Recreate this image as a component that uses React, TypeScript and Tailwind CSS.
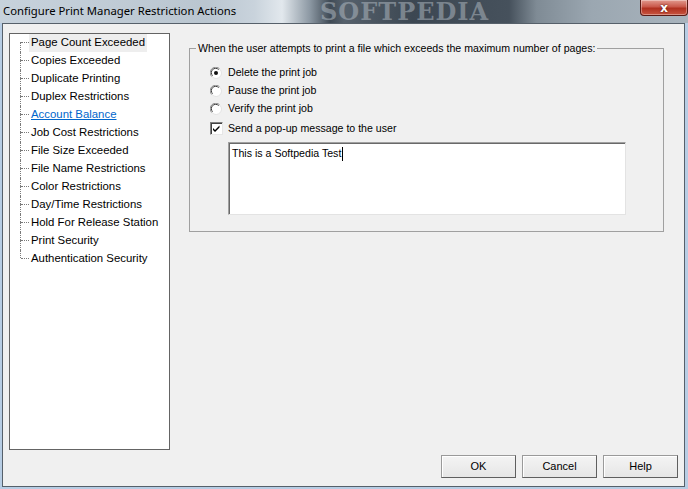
import React from "react";

const treeItems = [
	"Page Count Exceeded",
	"Copies Exceeded",
	"Duplicate Printing",
	"Duplex Restrictions",
	"Account Balance",
	"Job Cost Restrictions",
	"File Size Exceeded",
	"File Name Restrictions",
	"Color Restrictions",
	"Day/Time Restrictions",
	"Hold For Release Station",
	"Print Security",
	"Authentication Security",
];

const actions = ["Delete the print job", "Pause the print job", "Verify the print job"];

function Radio({ checked }: { checked?: boolean }) {
	return (
		<svg width="12" height="12" viewBox="0 0 12 12" className="shrink-0">
			<circle cx="6" cy="6" r="5.5" fill="#ffffff" />
			<path d="M1.8 9.6 A5.3 5.3 0 0 1 9.6 1.8" fill="none" stroke="#8a8a8a" strokeWidth="1" />
			<path d="M2.6 8.7 A4.2 4.2 0 0 1 8.7 2.6" fill="none" stroke="#404040" strokeWidth="1" />
			<path d="M9.9 2.3 A5.3 5.3 0 0 1 2.3 9.9" fill="none" stroke="#e2e2e2" strokeWidth="1" />
			{checked && <circle cx="6" cy="6" r="2" fill="#111111" />}
		</svg>
	);
}

function Checkbox({ checked }: { checked?: boolean }) {
	return (
		<div className="flex h-[13px] w-[13px] shrink-0 items-center justify-center border-t border-l border-r border-b border-t-[#808080] border-l-[#808080] border-r-[#e6e6e6] border-b-[#e6e6e6] bg-white shadow-[inset_1px_1px_0_#404040]">
			{checked && (
				<svg width="9" height="9" viewBox="0 0 9 9">
					<path d="M1 4 L3 6 L7.5 1.5 L7.5 3.5 L3 8 L1 6 Z" fill="#000000" />
				</svg>
			)}
		</div>
	);
}

function TreeRow({ label, index }: { label: string; index: number }) {
	const first = index === 0;
	const last = index === treeItems.length - 1;
	const link = label === "Account Balance";
	return (
		<div className="flex h-[18px] items-stretch">
			<div className="w-[10px] shrink-0" />
			<div className="flex w-px shrink-0 flex-col">
				<div className={first ? "h-[8px]" : "h-[8px] border-l border-dotted border-[#7a7a7a]"} />
				<div className={last ? "flex-1" : "flex-1 border-l border-dotted border-[#7a7a7a]"} />
			</div>
			<div className="mt-[8px] h-0 w-[8px] shrink-0 border-t border-dotted border-[#7a7a7a]" />
			<div className={first ? "flex items-center bg-[#eeeeee] px-[2px]" : "flex items-center px-[2px]"}>
				<span className={link ? "text-[#0066cc] underline" : "text-black"}>{label}</span>
			</div>
		</div>
	);
}

function WinButton({ children }: { children: React.ReactNode }) {
	return (
		<button className="flex h-[23px] w-[75px] items-center justify-center border border-[#9a9a9a] border-r-[#5f5f5f] border-b-[#5f5f5f] bg-[linear-gradient(#f4f4f4,#e6e6e6)] text-[11px] text-black shadow-[inset_1px_1px_0_#ffffff]">
			{children}
		</button>
	);
}

export default function App() {
	return (
		<div className="flex h-[489px] w-[688px] flex-col overflow-hidden bg-[#b7cde4] font-['Liberation_Sans',Arial,sans-serif]">
			{/* Title bar */}
			<div className="relative flex h-[23px] shrink-0 items-center overflow-hidden bg-[linear-gradient(90deg,#c7d2dc_0%,#bac6d0_30%,#c9d3dc_37%,#e2e8ed_41%,#8d99a4_45%,#3f4a55_48%,#56616c_50%,#3c4752_60%,#46515c_74%,#7f8b95_78%,#9ba7b1_86%,#a9b4bd_100%)]">
				<span className="absolute left-[320px] top-0 select-none font-['DejaVu_Serif',serif] text-[24px] font-bold leading-[23px] tracking-[1px] text-[#b5bec6]/50">
					SOFTPEDIA
				</span>
				<span className="relative pl-[3px] font-['Noto_Sans',sans-serif] text-[11.3px] text-black">
					Configure Print Manager Restriction Actions
				</span>
				<div className="absolute right-0 top-0 flex h-[16px] w-[48px] items-center justify-center rounded-b-[4px] border border-t-0 border-[#5a1a14] bg-[linear-gradient(#e29a8e,#c9584a_45%,#b0301f_55%,#c85540)] shadow-[inset_0_0_0_1px_rgba(255,255,255,0.35)]">
					<span className="font-['DejaVu_Sans',sans-serif] text-[12px] font-bold leading-none text-white [text-shadow:0_0_2px_#3a0a05]">
						x
					</span>
				</div>
			</div>

			{/* Client area */}
			<div className="mb-[2px] ml-[2px] mr-[3px] flex flex-1 flex-col border border-[#56606a] bg-[#f0f0f0]">
				<div className="flex flex-1 pl-[6px] pt-[9px]">
					{/* Tree */}
					<div className="h-[417px] w-[161px] shrink-0 border border-[#646464] bg-white text-[11.4px]">
						{treeItems.map((label, i) => (
							<TreeRow key={label} label={label} index={i} />
						))}
					</div>

					{/* Settings */}
					<div className="ml-[19px] flex flex-col">
						<fieldset className="mt-[8px] w-[475px] border border-[#a0a0a0] pb-[16px] text-[10.6px] text-black">
							<legend className="ml-[6px] px-[2px]">
								When the user attempts to print a file which exceeds the maximum number of pages:
							</legend>
							<div className="flex flex-col pl-[20px] pt-[7px]">
								{actions.map((a, i) => (
									<div key={a} className="flex h-[18px] items-center gap-[6px]">
										<Radio checked={i === 0} />
										<span>{a}</span>
									</div>
								))}
								<div className="mt-[2px] flex h-[18px] items-center gap-[5px]">
									<Checkbox checked />
									<span>Send a pop-up message to the user</span>
								</div>
								<div className="ml-[18px] mt-[4px] h-[73px] w-[398px] border border-t-[#a0a0a0] border-l-[#a0a0a0] border-r-[#e3e3e3] border-b-[#e3e3e3] bg-white shadow-[inset_1px_1px_0_#696969]">
									<div className="flex items-center pl-[3px] pt-[3px] text-[10.6px] text-black">
										<span>This is a Softpedia Test</span>
										<span className="ml-px h-[14px] w-px bg-black" />
									</div>
								</div>
							</div>
						</fieldset>
					</div>
				</div>

				{/* Buttons */}
				<div className="flex justify-end gap-[6px] pb-[8px] pr-[6px] pt-[5px]">
					<WinButton>OK</WinButton>
					<WinButton>Cancel</WinButton>
					<WinButton>Help</WinButton>
				</div>
			</div>
		</div>
	);
}
